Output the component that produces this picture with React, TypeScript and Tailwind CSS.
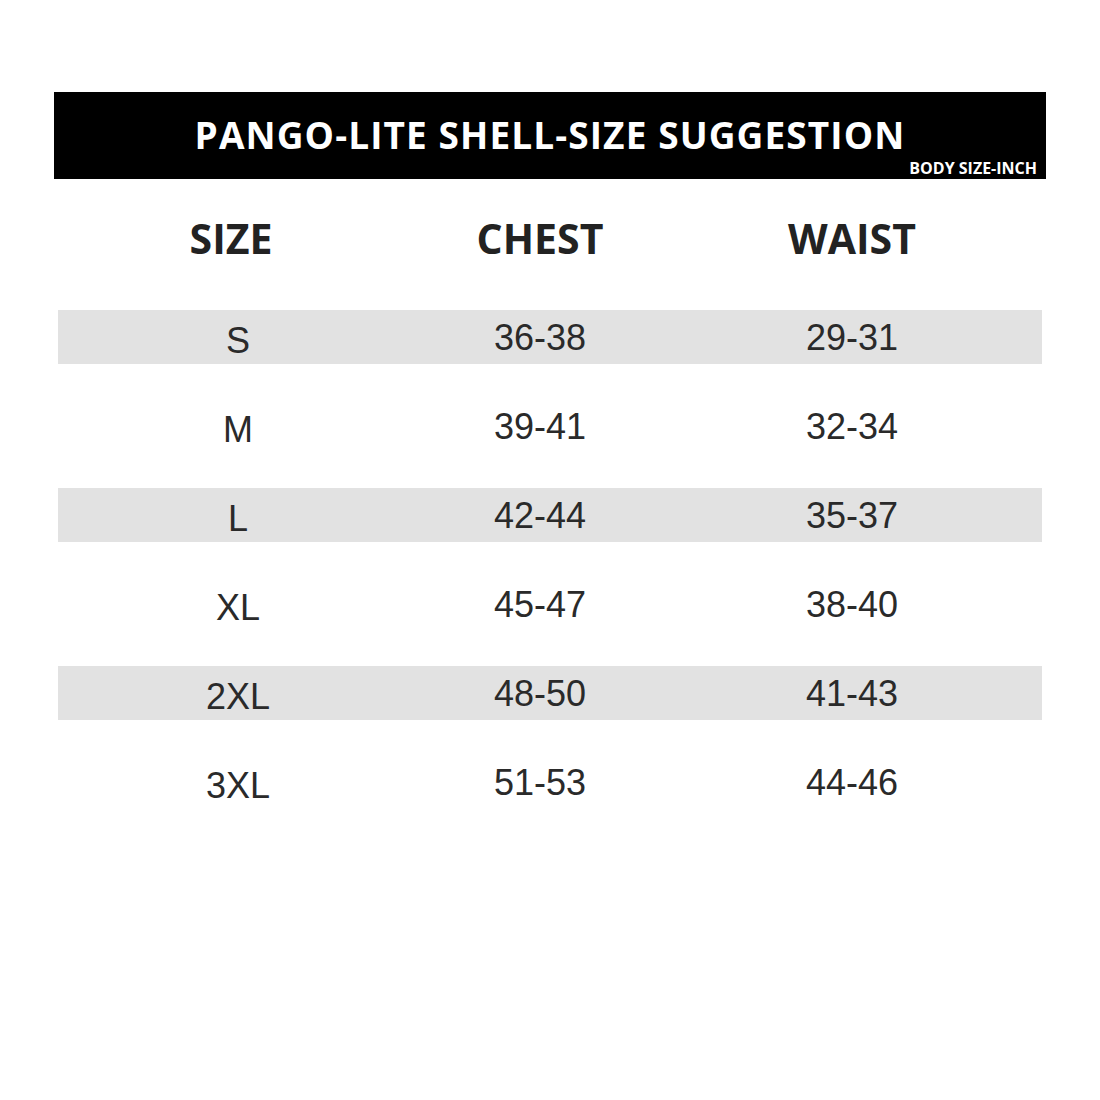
import React from "react";

const rows = [
  ["S", "36-38", "29-31"],
  ["M", "39-41", "32-34"],
  ["L", "42-44", "35-37"],
  ["XL", "45-47", "38-40"],
  ["2XL", "48-50", "41-43"],
  ["3XL", "51-53", "44-46"],
];

export default function App() {
  return (
    <div className="w-[1100px] h-[1100px] bg-white pt-[92px]">
      <div className="relative mx-[54px] h-[87px] bg-black flex items-center justify-center">
        <div
          className="text-white font-bold text-[37px] leading-none pb-[2px] tracking-[1.1px]"
          style={{ fontFamily: '"Open Sans", sans-serif' }}
        >
          PANGO-LITE SHELL-SIZE SUGGESTION
        </div>
        <div
          className="absolute right-[9px] bottom-[3px] text-white font-bold text-[16px] leading-none"
          style={{ fontFamily: '"Open Sans", sans-serif' }}
        >
          BODY SIZE-INCH
        </div>
      </div>

      <div className="mx-[58px]">
        <div
          className="mt-[35px] grid grid-cols-[360px_244px_380px] h-[48px] items-center text-[41px] font-bold text-[#222] leading-none"
          style={{ fontFamily: '"Open Sans", sans-serif' }}
        >
          <div className="text-center pr-[14px]">SIZE</div>
          <div className="text-center pl-[-2px]">CHEST</div>
          <div className="text-center">WAIST</div>
        </div>

        <div className="mt-[48px] flex flex-col gap-[35px]">
          {rows.map((r, i) => (
            <div
              key={r[0]}
              className={`grid grid-cols-[360px_244px_380px] h-[54px] items-center text-[36px] text-[#2a2a2a] leading-none ${
                i % 2 === 0 ? "bg-[#e2e2e2]" : "bg-white"
              }`}
              style={{ fontFamily: '"Liberation Sans", Arial, sans-serif' }}
            >
              <div className="text-center pt-[7px]">{r[0]}</div>
              <div className="text-center pt-[2px]">{r[1]}</div>
              <div className="text-center pt-[2px]">{r[2]}</div>
            </div>
          ))}
        </div>
      </div>
    </div>
  );
}
